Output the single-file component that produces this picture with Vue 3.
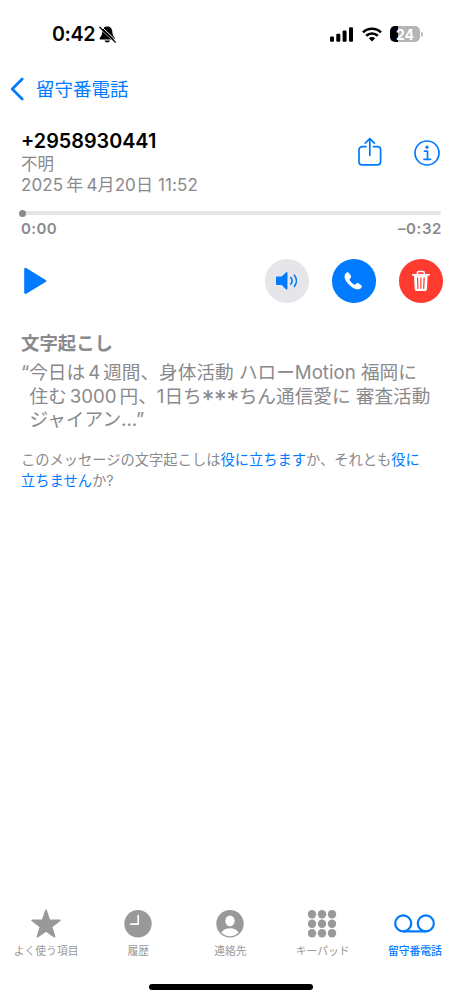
<script setup>
const tabs = [
  { id: 'favorites', label: 'よく使う項目' },
  { id: 'recents', label: '履歴' },
  { id: 'contacts', label: '連絡先' },
  { id: 'keypad', label: 'キーパッド' },
  { id: 'voicemail', label: '留守番電話', active: true },
]
const dots = [0, 1, 2].flatMap((r) => [0, 1, 2].map((c) => ({ x: 4.5 + c * 10, y: 4.5 + r * 9.5 })))
</script>

<template>
  <div class="screen">
    <header class="status">
      <span class="clock">0:42</span>
      <svg class="bell" width="17" height="18" viewBox="0 0 17 18">
        <path d="M8.300.5C5.300.5 3.400 2.600 3.300 5.600c-.1 3.200-.9 4.400-2.200 5.900-.9 1.100-.5 2.100.7 2.100h13c1.200 0 1.600-1 .7-2.100-1.300-1.500-2.100-2.700-2.200-5.900C13.200 2.600 11.300.5 8.300.5zM5.600 14.500c.3 1.300 1.300 2 2.700 2s2.400-.7 2.700-2z" fill="#000" />
        <path d="M0 1.600 16.400 17.200M2.200.3 17 14.500" stroke="#fff" stroke-width="1" />
        <path d="M.8 1.200 16.400 16.200" stroke="#000" stroke-width="1.200" stroke-linecap="round" />
      </svg>
      <span class="grow"></span>
      <svg class="signal" width="24" height="15" viewBox="0 0 24 15">
        <rect x="0" y="9.500" width="4" height="5.300" rx="1.100" />
        <rect x="6.300" y="6.700" width="4" height="8.100" rx="1.100" />
        <rect x="12.600" y="3.600" width="4" height="11.200" rx="1.100" />
        <rect x="19" y="0.300" width="4" height="14.500" rx="1.100" />
      </svg>
      <svg class="wifi" width="20" height="15" viewBox="0 0 20 15">
        <g fill="none" stroke="#000" stroke-width="2.600">
          <path d="M1 5.400a13 13 0 0 1 18 0" />
          <path d="M4.200 8.800a8.400 8.400 0 0 1 11.600 0" />
        </g>
        <path d="M10 14.500 6.800 11.300a4.600 4.600 0 0 1 6.400 0z" />
      </svg>
      <div class="battery"><span>24</span></div>
      <i class="cap"></i>
    </header>

    <nav class="nav">
      <svg width="14" height="24" viewBox="0 0 14 24"><path d="M12.200 2 2.200 12l10 10" fill="none" stroke="#007aff" stroke-width="2.700" stroke-linecap="round" stroke-linejoin="round" /></svg>
      <span>留守番電話</span>
    </nav>

    <main>
      <section class="caller">
        <div class="who">
          <h1>+2958930441</h1>
          <p class="unknown">不明</p>
          <p class="date">2025<span class="year">年</span>4月20日 11:52</p>
        </div>
        <svg class="share" width="24" height="30" viewBox="0 0 24 30" fill="none" stroke="#007aff" stroke-width="1.700" stroke-linecap="round" stroke-linejoin="round">
          <path d="M8 9.700H4.200A3.200 3.200 0 0 0 1 12.900v11.800a3.200 3.200 0 0 0 3.200 3.200h15.200a3.200 3.200 0 0 0 3.200-3.200V12.900a3.200 3.200 0 0 0-3.200-3.200h-3.800" />
          <path d="M11.800 18.300V2M7.200 6.200l4.600-4.600 4.600 4.600" />
        </svg>
        <svg class="info" width="28" height="28" viewBox="0 0 28 28" fill="none" stroke="#007aff" stroke-width="1.700">
          <circle cx="14" cy="14" r="12" />
          <circle cx="14" cy="8.200" r="1.600" fill="#007aff" stroke="none" />
          <path d="M11.500 12.200h3v8M11 20.300h6.600" stroke-linecap="round" stroke-linejoin="round" />
        </svg>
      </section>

      <div class="track"><i></i></div>
      <div class="times"><span>0:00</span><span class="left">–0:32</span></div>

      <section class="controls">
        <svg class="play" width="25" height="28" viewBox="0 0 25 28"><path d="M2.500 2.200v23.400L22 14z" fill="#007aff" stroke="#007aff" stroke-width="2.600" stroke-linejoin="round" /></svg>
        <span class="grow"></span>
        <button class="round speaker">
          <svg width="44" height="44" viewBox="0 0 44 44">
            <path d="M12.500 17.700h4.300l4.300-4.100c.8-.7 1.500-.4 1.500.6v15.600c0 1-.7 1.300-1.500.6l-4.300-4.100h-4.300c-.9 0-1.400-.5-1.400-1.400v-5.800c0-.9.500-1.400 1.400-1.400z" fill="#007aff" />
            <path d="M26 18.600c1.500 2 1.500 4.800 0 6.800M29.500 16.300c2.800 3.400 2.800 8 0 11.400" fill="none" stroke="#007aff" stroke-width="1.600" stroke-linecap="round" />
          </svg>
        </button>
        <button class="round call">
          <svg width="44" height="44" viewBox="0 0 44 44">
            <path d="M14.100 14.100c1.200-1.200 2.300-1 3.200.2l1.600 2.300c.7 1 .5 1.800-.3 2.700l-.8.8c-.3.3-.3.700 0 1.200 1.100 1.700 2.700 3.300 4.400 4.400.5.3.9.3 1.200 0l.8-.8c.8-.8 1.700-1 2.700-.3l2.200 1.500c1.200.9 1.200 2 .1 3.100-3 3-7.600.9-11.900-3.300s-6.200-8.800-3.200-11.800z" fill="#fff" />
          </svg>
        </button>
        <button class="round trash">
          <svg width="44" height="44" viewBox="0 0 44 44" fill="none" stroke="#fff" stroke-linecap="round">
            <path d="M13.900 16h16.300" stroke-width="1.700" />
            <path d="M18.500 15.500v-1.400c0-.9.500-1.400 1.400-1.400h4.200c.9 0 1.400.5 1.400 1.400v1.400" stroke-width="1.500" />
            <path d="M15.100 16.500h13.800l-.7 13.400c-.1 1.600-.9 2.300-2.400 2.300h-7.600c-1.500 0-2.300-.7-2.400-2.300z" fill="#fff" stroke="none" />
            <path d="m18.700 19 .4 10.500M22 19v10.500M25.300 19l-.4 10.500" stroke="#ff3b30" stroke-width="1.200" />
          </svg>
        </button>
      </section>

      <h2>文字起こし</h2>
      <blockquote>
        <div class="l1">“今日は<span class="num">4</span>週間、身体活動 ハローMotion 福岡に</div>
        <div class="l2">住む<span class="num">3000</span>円、1日ち<span class="stars">***</span>ちん通信愛に 審査活動</div>
        <div class="l3">ジャイアン...”</div>
      </blockquote>
      <p class="feedback">
        <span>このメッセージの文字起こしは<a>役に立ちます</a>か、それとも<a>役に</a></span>
        <span><a>立ちません</a>か?</span>
      </p>
    </main>

    <footer class="tabs">
      <div v-for="t in tabs" :key="t.id" class="tab" :class="{ active: t.active }">
        <svg v-if="t.id === 'favorites'" width="32" height="30" viewBox="0 0 32 30"><path d="M16 1.200 19.400 11.200 29.900 11.400 21.500 17.700 24.600 27.700 16 21.700 7.400 27.700 10.500 17.700 2.100 11.400 12.600 11.200z" fill="currentColor" stroke="currentColor" stroke-width="1.700" stroke-linejoin="round" /></svg>
        <svg v-else-if="t.id === 'recents'" width="28" height="28" viewBox="0 0 28 28"><circle cx="14" cy="13.700" r="13.700" fill="currentColor" /><path d="M14.200 5.500v8.700H6.800" fill="none" stroke="#fff" stroke-width="1.700" stroke-linecap="round" stroke-linejoin="round" /></svg>
        <svg v-else-if="t.id === 'contacts'" width="28" height="28" viewBox="0 0 28 28"><circle cx="14" cy="13.700" r="13.700" fill="currentColor" /><ellipse cx="14" cy="10.900" rx="4.700" ry="5.300" fill="#fff" /><path d="M5.300 22.500c1.700-2.700 5-4.200 8.700-4.200s7 1.500 8.700 4.200c-2.200 2.300-5.300 3.700-8.700 3.700s-6.500-1.400-8.700-3.700z" fill="#fff" /></svg>
        <svg v-else-if="t.id === 'keypad'" width="29" height="28" viewBox="0 0 29 28"><circle v-for="(d, i) in dots" :key="i" :cx="d.x - 0.5" :cy="d.y - 0.3" r="4.200" fill="currentColor" /></svg>
        <svg v-else width="42" height="28" viewBox="0 0 42 28" fill="none" stroke="currentColor" stroke-width="2.200"><circle cx="9.200" cy="13.400" r="8" /><circle cx="31.800" cy="13.400" r="8" /><path d="M9.200 21.400h22.600" /></svg>
        <span>{{ t.label }}</span>
      </div>
    </footer>
    <div class="home"></div>
  </div>
</template>

<style>
body { margin: 0; background: #fff; }
</style>

<style scoped>
.screen { width: 461px; height: 999px; box-sizing: border-box; display: flex; flex-direction: column; background: #fff; font-family: Inter, "Noto Sans CJK JP", sans-serif; color: #8a8a8e; overflow: hidden; }
.grow { flex: 1; }
h1, h2, p, blockquote { margin: 0; }
.status { height: 68px; display: flex; align-items: center; padding: 0 38px 0 52px; flex: none; box-sizing: border-box; }
.clock { color: #000; font-size: 19.700px; font-weight: 600; letter-spacing: -0.4px; width: 47px; }
.bell { margin-top: 1px; }
.wifi { margin: 0 8px 0 8px; }
.battery { width: 30px; height: 16px; border-radius: 5px; background: linear-gradient(90deg, #000 8px, #b5b5b5 8px); color: #fff; font-size: 14px; font-weight: 700; line-height: 17px; text-align: center; }
.cap { width: 2px; height: 5px; border-radius: 0 2px 2px 0; background: #bbb; margin-left: 1px; }
.nav { height: 42px; display: flex; align-items: center; gap: 12px; padding-left: 10px; color: #007aff; font-size: 18.500px; line-height: 26px; flex: none; }
main { padding: 0 20px 0 21px; flex: 1; }
.caller { display: flex; height: 101px; padding-top: 20px; box-sizing: border-box; }
.who { flex: 1; }
h1 { font-size: 19.800px; font-weight: 600; line-height: 22px; height: 23px; color: #000; white-space: nowrap; }
.unknown { font-size: 16.500px; line-height: 22px; height: 21px; }
.date { font-size: 17px; line-height: 22px; height: 22px; white-space: nowrap; letter-spacing: 0.12px; }
.year { margin: 0 3px; }
.share { margin: 7px 31px 0 0; }
.info { margin-top: 9px; }
.track { height: 4px; border-radius: 2px; background: #e4e4e6; margin-left: 1px; display: flex; align-items: center; }
.track i { width: 7px; height: 7px; border-radius: 50%; background: #8a8a8e; margin-left: -3px; flex: none; }
.times { display: flex; justify-content: space-between; font-size: 15px; font-weight: 600; line-height: 20px; margin-top: 4px; height: 20px; letter-spacing: 0.4px; }
.left { letter-spacing: 0.6px; margin-right: -1px; }
.controls { display: flex; align-items: center; gap: 23px; height: 44px; margin-top: 20px; margin-right: -1.500px; }
.play { margin-left: 2px; }
.round { width: 43.700px; height: 43.700px; border-radius: 50%; padding: 0; border: 0; display: block; flex: none; }
.round svg { display: block; width: 100%; height: 100%; }
.speaker { background: #e5e5ea; }
.call { background: #007aff; }
.trash { background: #ff3b30; }
h2 { font-size: 18.400px; font-weight: 700; line-height: 24px; margin-top: 28px; height: 24px; }
blockquote { margin-top: 6px; font-size: 18.650px; line-height: 23.500px; white-space: nowrap; }
blockquote div { height: 23.500px; }
.l2, .l3 { padding-left: 8.500px; }
.num { margin: 0 3px; }
.stars { font-size: 25px; letter-spacing: -0.200px; line-height: 1px; vertical-align: -5.500px; }
.feedback { margin-top: 17px; font-size: 14.280px; line-height: 21px; }
.feedback span { display: block; height: 21px; white-space: nowrap; }
.feedback a { color: #007aff; }
.tabs { display: grid; grid-template-columns: repeat(5, 1fr); height: 75px; flex: none; color: #999; }
.tab { display: flex; flex-direction: column; align-items: center; }
.tab svg { height: 30px; }
.tab span { font-size: 10.800px; line-height: 16px; margin-top: 5px; white-space: nowrap; }
.tab.active { color: #007aff; }
.tab.active span { font-weight: 500; }
.home { width: 164px; height: 6px; border-radius: 3px; background: #000; margin: 0 auto 9px; flex: none; }
</style>
